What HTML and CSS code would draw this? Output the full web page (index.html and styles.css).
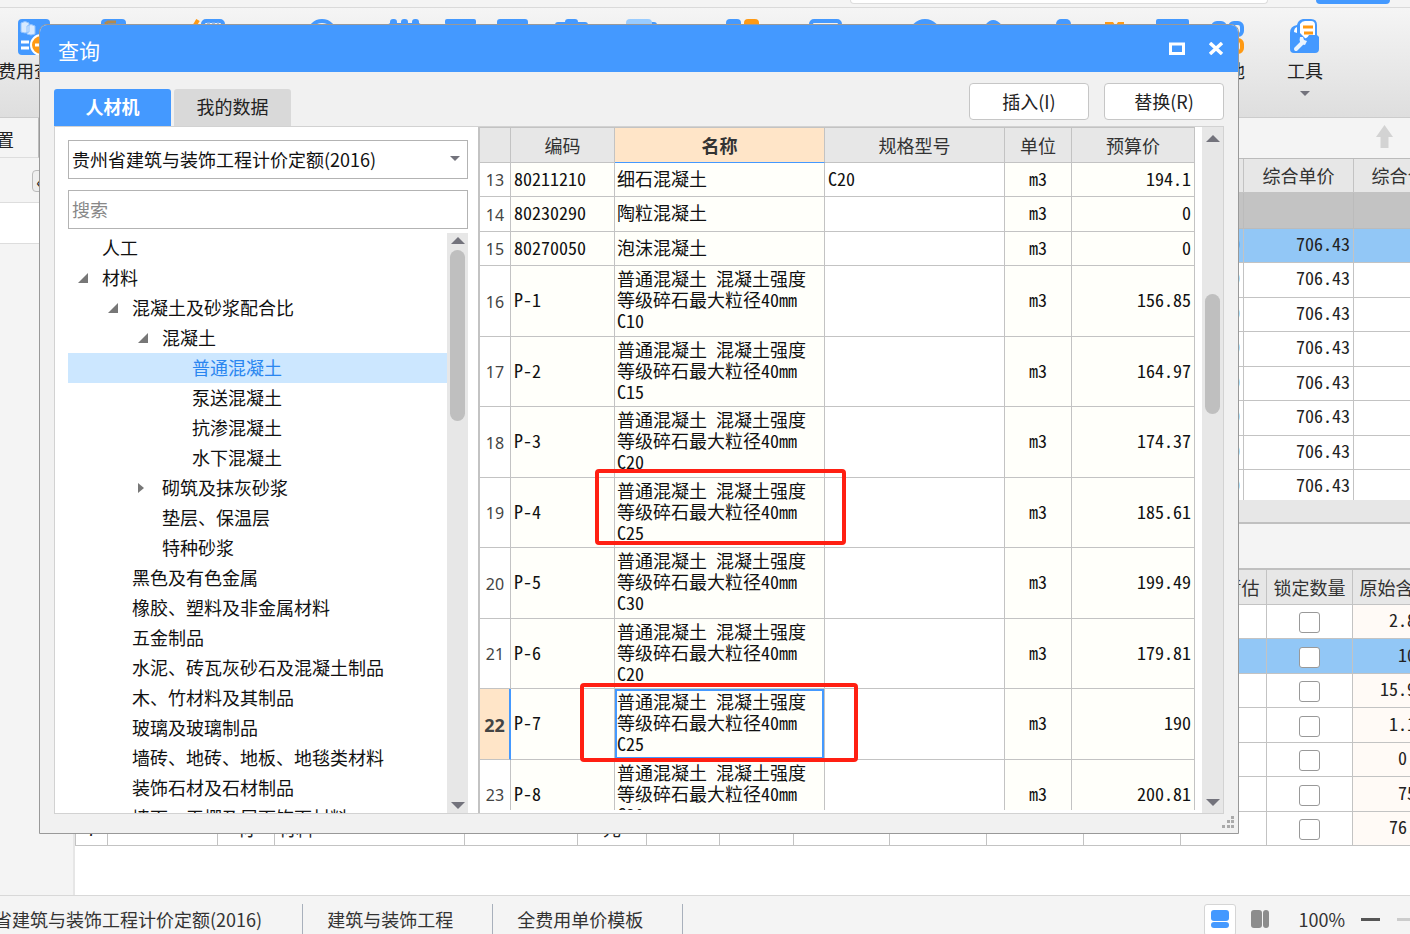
FILE: index.html
```html
<!DOCTYPE html>
<html lang="zh-CN">
<head>
<meta charset="utf-8">
<title>查询</title>
<link rel="stylesheet" href="styles.css">
</head>
<body>
<div class="app">
  <div class="topbar"><div class="top-search"></div><div class="top-pill"></div></div>

  <div class="ribbon">
    <button class="tool tool-cost">
      <svg width="34" height="36" viewBox="0 0 34 36"><rect x="1" y="0" width="32" height="36" rx="4" fill="#4499ff"/><path d="M4 4q4-3 8 0v9q-4 2-8 0zM10 7q4-3 8 0v8q-4 2-8 0z" fill="#d8eaff" stroke="#8fc2ff"/><path d="M4 23h8M4 29h8" stroke="#fff" stroke-width="3"/><circle cx="24" cy="26" r="10" fill="#ff9a14" stroke="#fff" stroke-width="2"/><path d="M18 26h12" stroke="#fff" stroke-width="3"/></svg>
      <span>费用查看</span>
    </button>
    <svg class="ribbon-strip" width="1141" height="36" viewBox="68 19 1141 36">
      <g fill="#4499ff">
        <rect x="101" y="19" width="25" height="34" rx="4"/>
        <rect x="390" y="19" width="7" height="12" rx="3"/><rect x="401" y="19" width="7" height="12" rx="3"/><rect x="412" y="19" width="7" height="12" rx="3"/><rect x="388" y="23" width="33" height="28" rx="3"/>
        <rect x="445" y="19" width="31" height="6" rx="2"/>
        <rect x="497" y="19" width="31" height="32" rx="3"/>
        <rect x="565" y="19" width="13" height="9" rx="3"/><rect x="555" y="22" width="33" height="30" rx="3"/>
        <rect x="640" y="22" width="17" height="28" rx="3"/>
        <rect x="726" y="19" width="15" height="15" rx="4"/>
        <circle cx="925" cy="35" r="16"/>
        <rect x="1056" y="19" width="15" height="20" rx="5"/>
        <rect x="1156" y="19" width="33" height="10" rx="2"/>
      </g>
      <rect x="626" y="19" width="26" height="30" rx="4" fill="#99ccff"/>
      <rect x="744" y="19" width="15" height="15" rx="4" fill="#ff9a14"/>
      <path d="M105 24l3-2h8" stroke="#b38a4d" stroke-width="3" fill="none"/>
      <path d="M195 25l3-5" stroke="#ff9a14" stroke-width="4" fill="none"/>
      <path d="M1105 22h8l2 3h-10zM1118 22h6v3h-8z" fill="#ff9a14"/>
      <g fill="none" stroke="#4499ff" stroke-width="4">
        <rect x="203" y="21" width="20" height="30" rx="3"/><circle cx="322" cy="34" r="13"/>
        <rect x="811" y="21" width="29" height="30" rx="3"/><path d="M987 26q6-8 13 0"/>
      </g>
      <path d="M207 24h12" stroke="#9bbce8" stroke-width="3" stroke-dasharray="3 2"/>
    </svg>
    <button class="tool tool-other">
      <svg width="36" height="36" viewBox="0 0 36 36" fill="none" stroke-width="4"><rect x="4" y="4" width="12" height="12" rx="4" stroke="#4499ff"/><rect x="21" y="4" width="12" height="12" rx="4" stroke="#4499ff"/><rect x="4" y="21" width="12" height="12" rx="4" stroke="#4499ff"/><rect x="21" y="21" width="12" height="12" rx="4" stroke="#ff9a14"/></svg>
      <span>其他</span>
    </button>
    <button class="tool tool-kit">
      <svg width="36" height="36" viewBox="0 0 36 36"><path d="M3 14q0-7 7-8q1-5 6-6h8q6 0 6 6v10l2 2v12q0 4-4 4H7q-4 0-4-4z" fill="#4499ff"/><path d="M13 5q2-3 5-3h6q4 0 4 4v10h-6q-2 4-4 3l-5-5z" fill="#fff"/><path d="M7 13q0-4 3-5v6z" fill="#fff"/><path d="M16 8h10M17 14h9" stroke="#ff9a14" stroke-width="3"/><path d="M9 30l7-7" stroke="#eaf4ff" stroke-width="4" stroke-linecap="round"/><path d="M13 18q-2 7 5 8l2-4-3-1-1-3z" fill="#eaf4ff"/></svg>
      <span>工具</span>
      <i class="tri-down small"></i>
    </button>
  </div>

  <div class="main">
    <div class="side">
      <div class="side-tab"><span>置</span></div>
      <div class="side-head"><button class="collapse" aria-label="收起">‹</button></div>
      <div class="side-row"></div>
    </div>
    <div class="work">
      <div class="workbar"><svg width="17" height="23" viewBox="0 0 17 23"><path d="M8.500 0L17 12h-4.500v11h-8V12H0z" fill="#d3d3d3"/></svg></div>
      <div class="upper">
        <table class="grid upper-grid">
          <colgroup><col><col class="w110"><col class="w108"></colgroup>
          <thead><tr><th></th><th>综合单价</th><th>综合合价</th></tr></thead>
          <tbody>
            <tr class="total"><td></td><td></td><td></td></tr>
            <tr class="picked"><td>0</td><td>706.43</td><td></td></tr>
            <tr><td>0</td><td>706.43</td><td></td></tr>
            <tr><td>0</td><td>706.43</td><td></td></tr>
            <tr><td>0</td><td>706.43</td><td></td></tr>
            <tr><td>0</td><td>706.43</td><td></td></tr>
            <tr><td>0</td><td>706.43</td><td></td></tr>
            <tr><td>0</td><td>706.43</td><td></td></tr>
            <tr class="last"><td>0</td><td>706.43</td><td></td></tr>
          </tbody>
        </table>
      </div>
      <div class="hscroll"></div>
      <div class="splitter"></div>
      <div class="lower">
        <table class="grid lower-grid">
          <colgroup><col class="w33"><col class="w110"><col class="w57"><col class="w190"><col class="w113"><col class="w69"><col class="w73"><col class="w74"><col class="w96"><col class="w97"><col class="w97"><col class="w97"><col><col class="w86"><col class="w86"></colgroup>
          <thead><tr><th></th><th></th><th></th><th></th><th></th><th></th><th></th><th></th><th></th><th></th><th></th><th></th><th>是否暂估</th><th>锁定数量</th><th>原始含量</th></tr></thead>
          <tbody>
            <tr><td colspan="13"></td><td class="ck"><input type="checkbox" aria-label="锁定数量 1"></td><td class="orig">2.83</td></tr>
            <tr class="picked"><td colspan="13"></td><td class="ck"><input type="checkbox" aria-label="锁定数量 2"></td><td class="orig">100</td></tr>
            <tr><td colspan="13"></td><td class="ck"><input type="checkbox" aria-label="锁定数量 3"></td><td class="orig">15.93</td></tr>
            <tr><td colspan="13"></td><td class="ck"><input type="checkbox" aria-label="锁定数量 4"></td><td class="orig">1.15</td></tr>
            <tr><td colspan="13"></td><td class="ck"><input type="checkbox" aria-label="锁定数量 5"></td><td class="orig">0.3</td></tr>
            <tr><td colspan="13"></td><td class="ck"><input type="checkbox" aria-label="锁定数量 6"></td><td class="orig">750</td></tr>
            <tr><td class="c">7</td><td></td><td class="c">材</td><td class="l">材料</td><td></td><td class="c">元</td><td></td><td></td><td></td><td></td><td></td><td></td><td></td><td class="ck"><input type="checkbox" aria-label="锁定数量 7"></td><td class="orig">76.5</td></tr>
          </tbody>
        </table>
      </div>
    </div>
  </div>

  <div class="status">
    <span class="st st-first">省建筑与装饰工程计价定额(2016)</span>
    <span class="st st-mid">建筑与装饰工程</span>
    <span class="st st-mid">全费用单价模板</span>
    <div class="st-right">
      <button class="view on" aria-label="上下布局"><svg width="18" height="18" viewBox="0 0 18 18" fill="#4499ff"><rect width="18" height="11" rx="3"/><rect y="12" width="18" height="6" rx="3"/></svg></button>
      <button class="view" aria-label="左右布局"><svg width="18" height="18" viewBox="0 0 18 18" fill="#8c8c8c"><rect width="11" height="18" rx="3"/><rect x="12" width="6" height="18" rx="3"/></svg></button>
      <span class="pct">100%</span>
      <button class="minus" aria-label="缩小"></button>
      <i class="track"></i>
    </div>
  </div>
</div>

<section class="dialog" role="dialog" aria-labelledby="dlg-title">
  <header class="titlebar">
    <h1 id="dlg-title">查询</h1>
    <button aria-label="最大化"><svg width="16" height="13" viewBox="0 0 16 13"><path d="M1.500 2h13v9.500h-13z" fill="none" stroke="#fff" stroke-width="3"/></svg></button>
    <button aria-label="关闭"><svg width="16" height="13" viewBox="0 0 16 13"><path d="M2 1l12 11M14 1L2 12" stroke="#fff" stroke-width="3.500"/></svg></button>
  </header>
  <div class="tools">
    <div class="tabs"><button class="tab on">人材机</button><button class="tab">我的数据</button></div>
    <div class="actions"><button>插入(I)</button><button>替换(R)</button></div>
  </div>
  <div class="panels">
    <div class="left">
      <div class="combo">
        <select class="field" aria-label="定额库"><option>贵州省建筑与装饰工程计价定额(2016)</option></select>
        <i class="tri-down small"></i>
      </div>
      <input class="field" type="text" placeholder="搜索" aria-label="搜索">
      <div class="tree-wrap">
        <ul class="tree">
          <li class="d0">人工</li>
          <li class="d0 open">材料</li>
          <li class="d1 open">混凝土及砂浆配合比</li>
          <li class="d2 open">混凝土</li>
          <li class="d3 sel">普通混凝土</li>
          <li class="d3">泵送混凝土</li>
          <li class="d3">抗渗混凝土</li>
          <li class="d3">水下混凝土</li>
          <li class="d2 shut">砌筑及抹灰砂浆</li>
          <li class="d2">垫层、保温层</li>
          <li class="d2">特种砂浆</li>
          <li class="d1">黑色及有色金属</li>
          <li class="d1">橡胶、塑料及非金属材料</li>
          <li class="d1">五金制品</li>
          <li class="d1">水泥、砖瓦灰砂石及混凝土制品</li>
          <li class="d1">木、竹材料及其制品</li>
          <li class="d1">玻璃及玻璃制品</li>
          <li class="d1">墙砖、地砖、地板、地毯类材料</li>
          <li class="d1">装饰石材及石材制品</li>
          <li class="d1">墙面、天棚及屋面饰面材料</li>
        </ul>
        <div class="vbar"><i class="tri-up"></i><i class="thumb tree-thumb"></i><i class="tri-down"></i></div>
      </div>
    </div>
    <div class="right">
      <div class="table-clip">
        <table class="grid query">
          <colgroup><col class="w31"><col class="w104"><col class="w210"><col><col class="w67"><col class="w123"></colgroup>
          <thead><tr><th></th><th>编码</th><th class="cur">名称</th><th>规格型号</th><th>单位</th><th>预算价</th></tr></thead>
          <tbody>
            <tr><th>13</th><td>80211210</td><td>细石混凝土</td><td>C20</td><td>m3</td><td>194.1</td></tr>
            <tr class="h35"><th>14</th><td>80230290</td><td>陶粒混凝土</td><td></td><td>m3</td><td>0</td></tr>
            <tr><th>15</th><td>80270050</td><td>泡沫混凝土</td><td></td><td>m3</td><td>0</td></tr>
            <tr class="h71"><th>16</th><td>P-1</td><td>普通混凝土 混凝土强度等级碎石最大粒径40mm C10</td><td></td><td>m3</td><td>156.85</td></tr>
            <tr class="h70"><th>17</th><td>P-2</td><td>普通混凝土 混凝土强度等级碎石最大粒径40mm C15</td><td></td><td>m3</td><td>164.97</td></tr>
            <tr class="h71"><th>18</th><td>P-3</td><td>普通混凝土 混凝土强度等级碎石最大粒径40mm C20</td><td></td><td>m3</td><td>174.37</td></tr>
            <tr class="h70"><th>19</th><td>P-4</td><td class="marked">普通混凝土 混凝土强度等级碎石最大粒径40mm C25<i class="mark mark-a"></i></td><td></td><td>m3</td><td>185.61</td></tr>
            <tr class="h71"><th>20</th><td>P-5</td><td>普通混凝土 混凝土强度等级碎石最大粒径40mm C30</td><td></td><td>m3</td><td>199.49</td></tr>
            <tr class="h70"><th>21</th><td>P-6</td><td>普通混凝土 混凝土强度等级碎石最大粒径40mm C20</td><td></td><td>m3</td><td>179.81</td></tr>
            <tr class="h71 current"><th>22</th><td>P-7</td><td class="marked focus">普通混凝土 混凝土强度等级碎石最大粒径40mm C25<i class="mark mark-b"></i></td><td></td><td>m3</td><td>190</td></tr>
            <tr class="h70"><th>23</th><td>P-8</td><td>普通混凝土 混凝土强度等级碎石最大粒径40mm C30</td><td></td><td>m3</td><td>200.81</td></tr>
          </tbody>
        </table>
      </div>
      <div class="vbar"><i class="tri-up"></i><i class="thumb query-thumb"></i><i class="tri-down"></i></div>
    </div>
  </div>
  <svg class="grip" width="12" height="12" viewBox="0 0 12 12" fill="#aaa"><path d="M9 0h3v3h-3zM9 4h3v3h-3zM9 9h3v3h-3zM5 4h3v3h-3zM5 9h3v3h-3zM0 9h3v3h-3z"/></svg>
</section>
</body>
</html>
```
FILE: styles.css
```css
* { box-sizing: border-box; }
body {
  margin: 0;
  font: 18px/24px "Noto Sans CJK SC", sans-serif;
  color: #222;
  overflow: hidden;
}
button, input, select { font: inherit; color: inherit; margin: 0; padding: 0; }
button { border: 0; background: none; }
ul { margin: 0; padding: 0; list-style: none; }
i { display: block; }

.app { height: 100vh; display: flex; flex-direction: column; overflow: hidden; background: #f4f4f4; }

.topbar { height: 8px; flex: none; display: flex; justify-content: flex-end; gap: 48px; padding-right: 20px; border-bottom: 1px solid #dadada; }
.top-search { width: 418px; height: 4px; background: #fff; border: 1px solid #ddd; border-top: 0; border-radius: 0 0 4px 4px; }
.top-pill { width: 74px; height: 4px; background: #4499ff; border-radius: 0 0 14px 14px; }

.ribbon { flex: none; height: 110px; padding-top: 11px; display: flex; align-items: flex-start; background: linear-gradient(#f5f5f5, #dedede); border-bottom: 1px solid #ccc; }
.ribbon > * { flex: none; }
.tool { display: flex; flex-direction: column; align-items: center; white-space: nowrap; gap: 3px; }
.tool-cost { width: 68px; }
.tool-other { width: 36px; }
.tool-kit { width: 36px; margin-left: 42px; }

.main { flex: 1; min-height: 0; display: grid; grid-template-columns: 75px minmax(0, 1fr); }
.side { border-right: 2px solid #e6e6e6; }
.side-tab { width: 39px; height: 40px; line-height: 42px; overflow: hidden; border-right: 1px solid #bbb; border-bottom: 1px solid #ddd; display: flex; justify-content: flex-end; padding-right: 24px; }
.side-head { height: 45px; padding: 12px 0 0 32px; border-bottom: 1px solid #ddd; }
.collapse { width: 14px; height: 22px; line-height: 18px; border: 1px solid #bbb; border-radius: 4px; background: #eee; display: block; }
.side-row { height: 41px; background: #fff; border-bottom: 1px solid #ddd; }

.work { display: flex; flex-direction: column; min-height: 0; background: #fff; }
.workbar { flex: none; height: 40px; padding: 7px 17px 0; display: flex; justify-content: flex-end; background: #f4f4f4; }
.upper { flex: none; height: 342px; overflow: hidden; }
.hscroll { flex: none; height: 22px; background: #e7e7e7; }
.splitter { flex: none; height: 48px; background: #f4f4f4; border: solid #c0c0c0; border-width: 2px 0; }
.lower { flex: 1; min-height: 0; overflow: hidden; }

.grid { table-layout: fixed; border-collapse: separate; border-spacing: 0; font-family: "Noto Sans Mono CJK SC", "Noto Sans CJK SC", monospace; line-height: 21px; }
.grid th, .grid td { padding: 0 3px; border: solid #c3c3c3; border-width: 0 1px 1px 0; height: 34px; white-space: nowrap; }
.grid thead th { height: 35px; background: #e7e7e7; font-weight: 400; padding: 0; color: #333; }
.upper-grid { width: calc(100% + 52px); border-top: 1px solid #bbb; }
.upper-grid td { text-align: right; padding-bottom: 5px; }
.upper-grid thead th { height: 34px; }
.upper-grid .total td { height: 36px; background: #c3c3c3; border-color: #bbb; }
.upper-grid tr:nth-child(odd):not(.total) td { height: 35px; }
.upper-grid .picked td:first-child { border-left: 0; }
.grid .picked td, .grid .picked .orig { background: #92c7f6; }

.lower-grid { width: calc(100% + 29px); border-left: 1px solid #c3c3c3; }
.lower-grid tr:nth-child(even) td { height: 35px; }
.lower-grid .ck { text-align: center; }
.lower-grid .c { text-align: center; }
.lower-grid .orig { text-align: right; background: #fffaf6; padding-right: 13px; padding-bottom: 4px; }
.ck input { appearance: none; width: 21px; height: 21px; border: 1px solid #999; border-radius: 3px; background: #fff; vertical-align: middle; }

.w31 { width: 31px; } .w33 { width: 32px; } .w57 { width: 57px; } .w67 { width: 67px; }
.w69 { width: 69px; } .w73 { width: 73px; } .w74 { width: 74px; } .w86 { width: 86px; }
.w96 { width: 96px; } .w97 { width: 97px; } .w104 { width: 104px; } .w108 { width: 108px; }
.w110 { width: 110px; } .w113 { width: 113px; } .w123 { width: 123px; } .w190 { width: 190px; } .w210 { width: 210px; }

.status { flex: none; height: 39px; display: flex; align-items: flex-start; padding-top: 8px; border-top: 1px solid #d8d8d8; overflow: hidden; white-space: nowrap; color: #333; }
.st { line-height: 30px; border-right: 1px solid #a8b0bc; }
.st-first { margin-left: -6px; padding-right: 40px; }
.st-mid { padding: 0 39px 0 24px; }
.st-right { margin-left: auto; display: flex; align-items: center; line-height: 22px; }
.view { width: 32px; height: 32px; margin-right: 8px; display: grid; place-items: center; border: 1px solid transparent; border-radius: 3px; }
.view.on { background: #fff; border-color: #d5d5d5; }
.view svg { margin-bottom: 2px; }
.pct { margin: 0 16px 2px 14px; }
.minus { width: 19px; height: 3px; background: #555; margin: 0 17px 2px 0; }
.track { width: 13px; height: 3px; background: #ccc; margin-bottom: 2px; }

.tri-up, .tri-down { width: 0; height: 0; border: solid transparent; border-width: 0 7px; }
.tri-up { border-bottom: 7px solid #73737c; }
.tri-down { border-top: 7px solid #73737c; }
.tri-down.small { border-left-width: 5px; border-right-width: 5px; border-top-width: 5px; }
.tool .small { margin-top: 6px; }

.dialog { position: absolute; inset: 24px 171px 100px 39px; display: flex; flex-direction: column; background: #f1f1f1; border: 1px solid #999; border-radius: 8px 8px 0 0; overflow: hidden; }
.titlebar { flex: none; height: 47px; background: #4499ff; color: #fff; display: flex; align-items: center; gap: 23px; padding: 0 14px 0 18px; }
.titlebar h1 { margin: 0 auto 0 0; font-size: 21px; font-weight: 400; line-height: 30px; padding-top: 2px; }
.titlebar button { display: block; line-height: 0; }
.tools { flex: none; height: 54px; padding: 0 14px; display: flex; justify-content: space-between; align-items: flex-end; }
.tabs { display: flex; gap: 3px; }
.tab { width: 117px; height: 37px; padding-bottom: 3px; background: #d9d9d9; border-radius: 3px 3px 0 0; }
.tab.on { background: #4499ff; color: #fff; font-weight: 700; }
.actions { display: flex; gap: 15px; padding-bottom: 6px; }
.actions button { width: 120px; height: 37px; padding-bottom: 2px; background: #fff; border: 1px solid #c6c6c6; border-radius: 4px; }

.panels { flex: 1; min-height: 0; margin: 0 14px 19px; display: flex; border: 1px solid #d2d2d2; background: #fff; }
.left { flex: none; width: 423px; padding: 13px 9px 0 13px; display: flex; flex-direction: column; color: #111; }
.field { flex: none; width: 400px; height: 39px; border: 1px solid #b3b3b3; border-radius: 0; padding: 0 3px 2px; background: #fff; margin-bottom: 11px; outline: 0; display: block; }
.combo { position: relative; }
.combo .field { appearance: none; }
.combo .small { position: absolute; right: 9px; top: 16px; pointer-events: none; }
.field::placeholder { color: #888; opacity: 1; }
.tree-wrap { flex: 1; min-height: 0; width: 400px; margin-top: -7px; display: flex; }
.tree { flex: 1; overflow: hidden; }
.tree li { height: 30px; padding-bottom: 2px; display: flex; align-items: center; white-space: nowrap; }
.tree li::before { content: ""; width: 10px; height: 10px; margin: 2px 14px 0 0; }
.tree .open::before { background: #777; clip-path: polygon(100% 0, 100% 100%, 0 100%); }
.tree .shut::before { background: #777; clip-path: polygon(0 0, 60% 50%, 0 100%); }
.d0 { padding-left: 10px; } .d1 { padding-left: 40px; } .d2 { padding-left: 70px; } .d3 { padding-left: 100px; }
.tree .sel { background: #cce7ff; color: #2a86f0; }

.vbar { flex: none; width: 21px; background: #e7e7e7; display: flex; flex-direction: column; align-items: center; padding: 4px 0; }
.vbar .tri-down { margin-top: auto; }
.thumb { width: 15px; border-radius: 8px; background: #bfbfbf; }
.tree-thumb { height: 171px; margin-top: 6px; }
.query-thumb { height: 120px; margin-top: 152px; }
.right { flex: 1; min-width: 0; display: flex; border-left: 2px solid #c3c3c3; }
.right .vbar { padding: 8px 0 7px; }
.table-clip { flex: 1; min-width: 0; margin: 0 7px 3px 0; overflow: hidden; }
.query { width: 100%; border-top: 1px solid #c3c3c3; color: #111; }
.query thead th { height: 35px; }
.query thead .cur { background: #ffe5c8; font-weight: 700; border-bottom-color: #4499ff; }
.query tbody th { font: 16px/21px "Noto Sans", sans-serif; color: #444; padding: 2px 0 0; }
.query td { padding-bottom: 3px; }
.query td:nth-child(2), .query td:nth-child(3), .query td:nth-child(5), .query td:nth-child(6) { background: #fffffa; }
.query td:nth-child(3) { white-space: normal; padding: 0 2px 3px; }
.query td:nth-child(5) { text-align: center; }
.query td:nth-child(6) { text-align: right; }
.query .h35 > * { height: 35px; }
.query .h70 > * { height: 70px; }
.query .h71 > * { height: 71px; }
.query .current th { background: #ffe5c8; font-weight: 700; font-size: 18px; border-right: 2px solid #4499ff; }
.marked { position: relative; }
.focus { box-shadow: inset 2px 2px #4499ff, inset -2px -2px #4499ff; }
.mark { position: absolute; z-index: 1; border: 4px solid #ff1f12; border-radius: 4px; }
.mark-a { inset: -9px -22px 2px -20px; }
.mark-b { inset: -6px -34px -3px -35px; }
.grip { position: absolute; right: 4px; bottom: 5px; }
```
